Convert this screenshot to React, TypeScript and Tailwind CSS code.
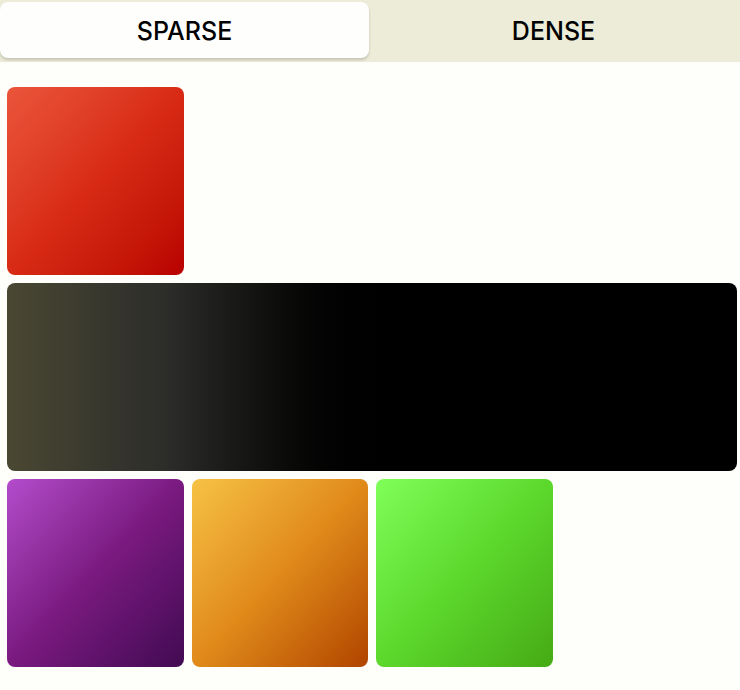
import React, { useState } from 'react';

type Tile = {
    id: string;
    wide?: boolean;
    gradient: string;
};

const tiles: Tile[] = [
    { id: 'red', gradient: 'bg-gradient-to-br from-[#ea553a] via-[#d82a14] to-[#b80000]' },
    { id: 'dark', wide: true, gradient: 'bg-gradient-to-r from-[#4a4832] via-[#2c2c2a] via-22% to-black to-55%' },
    { id: 'purple', gradient: 'bg-gradient-to-br from-[#b44ccc] via-[#7a1a80] to-[#420a52]' },
    { id: 'orange', gradient: 'bg-gradient-to-br from-[#f6c244] via-[#e08a1a] to-[#b04400]' },
    { id: 'green', gradient: 'bg-gradient-to-br from-[#80ff58] via-[#5cd82c] to-[#46aa14]' },
];

export default function App() {
    const [mode, setMode] = useState<'sparse' | 'dense'>('sparse');

    return (
        <div className="min-h-[690px] w-[740px] bg-[#fefefb]" style={{ fontFamily: 'Inter, "Liberation Sans", sans-serif' }}>
            <div className="flex h-[62px] bg-[#ececd8] pt-[2px] pb-[4px] pr-[2px]">
                <button
                    onClick={() => setMode('sparse')}
                    className={`flex-1 rounded-[8px] pt-[3px] text-[25px] font-medium text-black ${mode === 'sparse' ? 'bg-[#fefefd] shadow-[0_2px_3px_rgba(0,0,0,0.18)]' : ''}`}
                >
                    SPARSE
                </button>
                <button
                    onClick={() => setMode('dense')}
                    className={`flex-1 rounded-[8px] pt-[3px] text-[25px] font-medium text-black ${mode === 'dense' ? 'bg-[#fefefd] shadow-[0_2px_3px_rgba(0,0,0,0.18)]' : ''}`}
                >
                    DENSE
                </button>
            </div>

            <div className={`grid grid-cols-4 auto-rows-[188px] gap-x-2 gap-y-2 pl-[7px] pr-[3px] pt-[25px] ${mode === 'dense' ? 'grid-flow-row-dense' : ''}`}>
                {tiles.map((t) => (
                    <div
                        key={t.id}
                        className={`rounded-[8px] ${t.gradient} ${t.wide ? 'col-span-4' : ''}`}
                    />
                ))}
            </div>
        </div>
    );
}
